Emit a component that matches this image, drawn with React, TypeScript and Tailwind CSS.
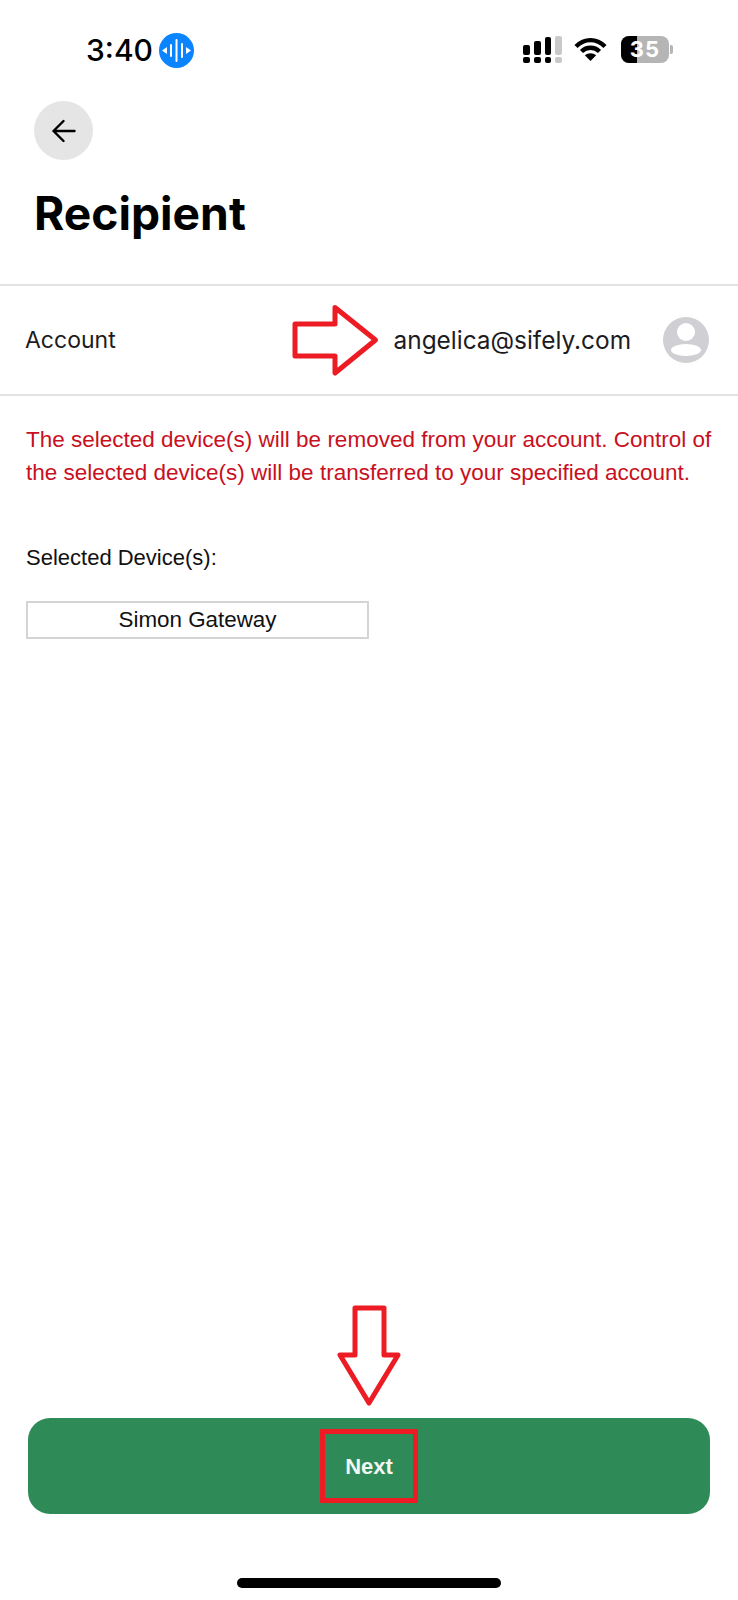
import React from "react";

function Cell() {
  const bars = [
    ["h-[10px]", "bg-black"],
    ["h-[14px]", "bg-black"],
    ["h-[18px]", "bg-black"],
    ["h-[19px]", "bg-[#c9c9c9]"],
  ];
  return (
    <div className="flex gap-[4px] w-[39px] h-[27px]">
      {bars.map(([h, c], i) => (
        <div key={i} className="flex flex-col justify-end gap-[2px] w-[7px]">
          <div className={`${h} ${c} rounded-[2px]`} />
          <div className={`h-[6px] ${c} rounded-[2px]`} />
        </div>
      ))}
    </div>
  );
}

export default function App() {
  return (
    <div className="relative w-[738px] h-[1600px] bg-white flex flex-col font-['Inter',sans-serif] text-black overflow-hidden">
      {/* status bar */}
      <div className="h-[101px] flex items-start justify-between pl-[86px] pr-[65px] pt-[33px] shrink-0">
        <div className="flex items-center gap-[6px] h-[35px]">
          <span className="text-[30px] leading-[35px] font-medium">3:40</span>
          <svg width="35" height="35" viewBox="0 0 35 35">
            <circle cx="17.5" cy="17.5" r="17.5" fill="#0a84ff" />
            <path d="M3 17.5 L8 14 V21 Z M32 17.5 L27 14 V21 Z" fill="#fff" />
            <path d="M12 12 V23 M17.5 7 V28 M23 11 V24" stroke="#fff" strokeWidth="2" strokeLinecap="round" />
          </svg>
        </div>
        <div className="flex items-center h-[27px] mt-[3px]">
          <Cell />
          <svg className="ml-[12px]" width="33" height="25" viewBox="0 0 33 25">
            <path d="M2 9.5 C10.5 1 22.5 1 31 9.5" fill="none" stroke="#000" strokeWidth="4.4" />
            <path d="M7.5 14.5 C12.5 9.5 20.5 9.5 25.5 14.5" fill="none" stroke="#000" strokeWidth="4.4" />
            <path d="M16.5 24 L10.8 18.3 C14 15.5 19 15.5 22.2 18.3 Z" fill="#000" />
          </svg>
          <div className="relative ml-[14px] w-[48px] h-[27px] rounded-[8px] bg-[#b5b5b5] overflow-hidden flex items-center justify-center">
            <div className="absolute left-0 top-0 bottom-0 w-[16px] bg-black" />
            <span className="relative text-[22px] leading-[27px] font-bold text-white tracking-[1px]">35</span>
          </div>
          <div className="ml-[1px] w-[3px] h-[9px] rounded-r-[2px] bg-[#b5b5b5]" />
        </div>
      </div>

      {/* header */}
      <div className="pl-[34px] shrink-0">
        <div className="w-[59px] h-[59px] rounded-full bg-[#e5e5e5] flex items-center justify-center">
          <svg width="24" height="24" viewBox="0 0 24 24" fill="none" stroke="#000" strokeWidth="2.4" strokeLinecap="round" strokeLinejoin="round">
            <path d="M22.5 12 H1.5 M11.5 2 L1.5 12 L11.5 22" />
          </svg>
        </div>
        <h1 className="mt-[25px] text-[46.2px] leading-[56px] font-bold">Recipient</h1>
      </div>

      {/* account row */}
      <div className="mt-[43px] h-[112px] shrink-0 border-y-2 border-[#e3e3e3] flex items-center pl-[25px] pr-[29px]">
        <span className="text-[23px] text-[#1c1c1e]">Account</span>
        <span className="ml-auto text-[24.4px] text-[#1c1c1e]">angelica@sifely.com</span>
        <svg className="ml-[32px]" width="46" height="46" viewBox="0 0 46 46">
          <circle cx="23" cy="23" r="23" fill="#cfcfd4" />
          <circle cx="23" cy="15" r="9" fill="#fff" />
          <ellipse cx="23" cy="33" rx="15" ry="6" fill="#fff" />
        </svg>
      </div>

      {/* warning */}
      <div className="pl-[26px] pr-[20px] pt-[27px] font-['Liberation_Sans',sans-serif] shrink-0">
        <p className="text-[22.5px] leading-[33px] text-[#c8101e] whitespace-nowrap">
          The selected device(s) will be removed from your account. Control of
          <br />
          the selected device(s) will be transferred to your specified account.
        </p>
        <p className="mt-[54px] text-[22px] leading-[30px] text-[#111]">Selected Device(s):</p>
        <div className="mt-[28px] w-[343px] h-[38px] border-2 border-[#d4d4d4] flex items-center justify-center text-[22.4px] text-[#111]">
          Simon Gateway
        </div>
      </div>

      {/* next button */}
      <div className="mt-auto px-[28px] shrink-0 font-['Liberation_Sans',sans-serif]">
        <div className="h-[96px] rounded-[22px] bg-[#2e8b57] flex items-center justify-center text-[#f2f7f4] text-[22px] font-bold">
          Next
        </div>
      </div>

      {/* home indicator */}
      <div className="mt-[64px] mb-[12px] mx-auto w-[264px] h-[10px] rounded-full bg-black shrink-0" />

      {/* annotations */}
      <svg className="absolute left-0 top-0 pointer-events-none" width="738" height="1600" fill="none">
        <path d="M295 324 H335 V307.5 L375.5 340 L335 373 V356 H295 Z" stroke="#ed1c24" strokeWidth="5" strokeLinejoin="round" />
        <path d="M355 1308 H384 V1355 H398 L369 1403 L340 1355 H355 Z" stroke="#ed1c24" strokeWidth="5" strokeLinejoin="round" />
      </svg>
      <div className="absolute left-[320px] top-[1429px] w-[98px] h-[74px] border-[5px] border-[#ed1c24]" />
    </div>
  );
}
